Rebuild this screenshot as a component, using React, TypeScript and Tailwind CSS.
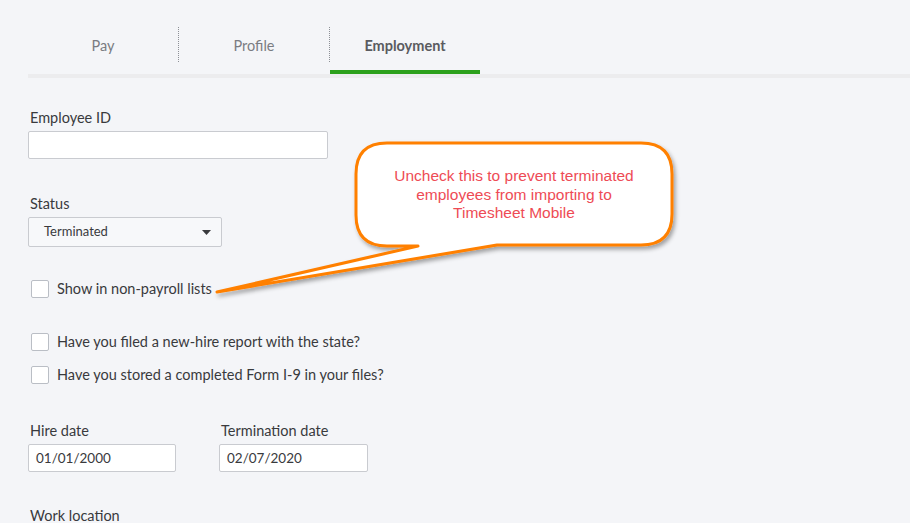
const tabs = ['Pay', 'Profile', 'Employment'];

const Checkbox = ({ label }: { label: string }) => (
    <label className="flex items-center gap-[8px] pl-[3px]">
        <span className="h-[18px] w-[18px] shrink-0 rounded-[2px] border border-[#babec5] bg-white" />
        <span className="text-[14.5px] leading-[20px] text-[#393a3d]">{label}</span>
    </label>
);

const Field = ({ label, value, width }: { label: string; value?: string; width: string }) => (
    <div className="flex flex-col">
        <span className="mb-[3px] pl-[2px] text-[14.5px] leading-[20px] text-[#393a3d]">{label}</span>
        <div
            className={`${width} flex h-[28px] items-center rounded-[2px] border border-[#c9cbd0] bg-white px-[7px] text-[13.5px] text-[#393a3d]`}
        >
            {value}
        </div>
    </div>
);

export default function App() {
    return (
        <div
            className="relative h-[523px] w-[910px] overflow-hidden bg-[#f4f5f8]"
            style={{ fontFamily: 'Lato, "Open Sans", sans-serif' }}
        >
            {/* Tabs */}
            <div className="pl-[28px] pt-[27px]">
                <div className="flex">
                    {tabs.map((tab, i) => (
                        <div key={tab} className="flex">
                            {i > 0 && <div className="h-[35px] w-px border-l border-dotted border-[#8d9096]" />}
                            <div className="flex w-[150px] flex-col">
                                <div
                                    className={`flex h-[35px] items-center justify-center pt-[2px] text-[14.5px] ${
                                        tab === 'Employment' ? 'font-bold text-[#5a5b60]' : 'text-[#7a7c82]'
                                    }`}
                                >
                                    {tab}
                                </div>
                                <div className={`mt-[8px] h-[4px] ${tab === 'Employment' ? 'bg-[#2ca01c]' : ''}`} />
                            </div>
                        </div>
                    ))}
                </div>
                <div className="h-[4px] bg-[#ececee]" />
            </div>

            {/* Form */}
            <div className="flex flex-col pl-[28px] pt-[30px]">
                <Field label="Employee ID" width="w-[300px]" />

                <div className="mt-[35px] flex flex-col">
                    <span className="mb-[3px] pl-[2px] text-[14.5px] leading-[20px] text-[#393a3d]">Status</span>
                    <div className="flex h-[30px] w-[194px] items-center justify-between rounded-[2px] border border-[#c9cbd0] bg-[#f7f8fa] pl-[15px] pr-[10px] text-[13px] text-[#393a3d]">
                        <span>Terminated</span>
                        <svg width="9" height="5" viewBox="0 0 9 5">
                            <path d="M0 0h9L4.5 5z" fill="#393a3d" />
                        </svg>
                    </div>
                </div>

                <div className="mt-[32px]">
                    <Checkbox label="Show in non-payroll lists" />
                </div>
                <div className="mt-[33px] flex flex-col gap-[13px]">
                    <Checkbox label="Have you filed a new-hire report with the state?" />
                    <Checkbox label="Have you stored a completed Form I-9 in your files?" />
                </div>

                <div className="mt-[36px] flex gap-[43px]">
                    <Field label="Hire date" value="01/01/2000" width="w-[148px]" />
                    <Field label="Termination date" value="02/07/2020" width="w-[149px]" />
                </div>

                <span className="mt-[34px] pl-[2px] text-[14.5px] leading-[20px] text-[#393a3d]">Work location</span>
            </div>

            {/* Callout overlay */}
            <svg className="pointer-events-none absolute left-0 top-0" width="910" height="523">
                <defs>
                    <filter id="sh" x="-10%" y="-10%" width="130%" height="140%">
                        <feDropShadow dx="2" dy="3" stdDeviation="2" floodColor="#000" floodOpacity="0.35" />
                    </filter>
                </defs>
                <path
                    d="M387 143 H641 Q672 143 672 174 V214 Q672 245 641 245 H497 L217 292 L418 246 H387 Q356 246 356 215 V174 Q356 143 387 143 Z"
                    fill="#fff"
                    stroke="#ff8000"
                    strokeWidth="3"
                    strokeLinejoin="round"
                    filter="url(#sh)"
                />
            </svg>
            <div
                className="absolute left-[356px] top-[167px] w-[316px] text-center text-[15.5px] leading-[18.5px] text-[#ee4b55]"
                style={{ fontFamily: '"Liberation Sans", Arial, sans-serif' }}
            >
                Uncheck this to prevent terminated
                <br />
                employees from importing to
                <br />
                Timesheet Mobile
            </div>
        </div>
    );
}
